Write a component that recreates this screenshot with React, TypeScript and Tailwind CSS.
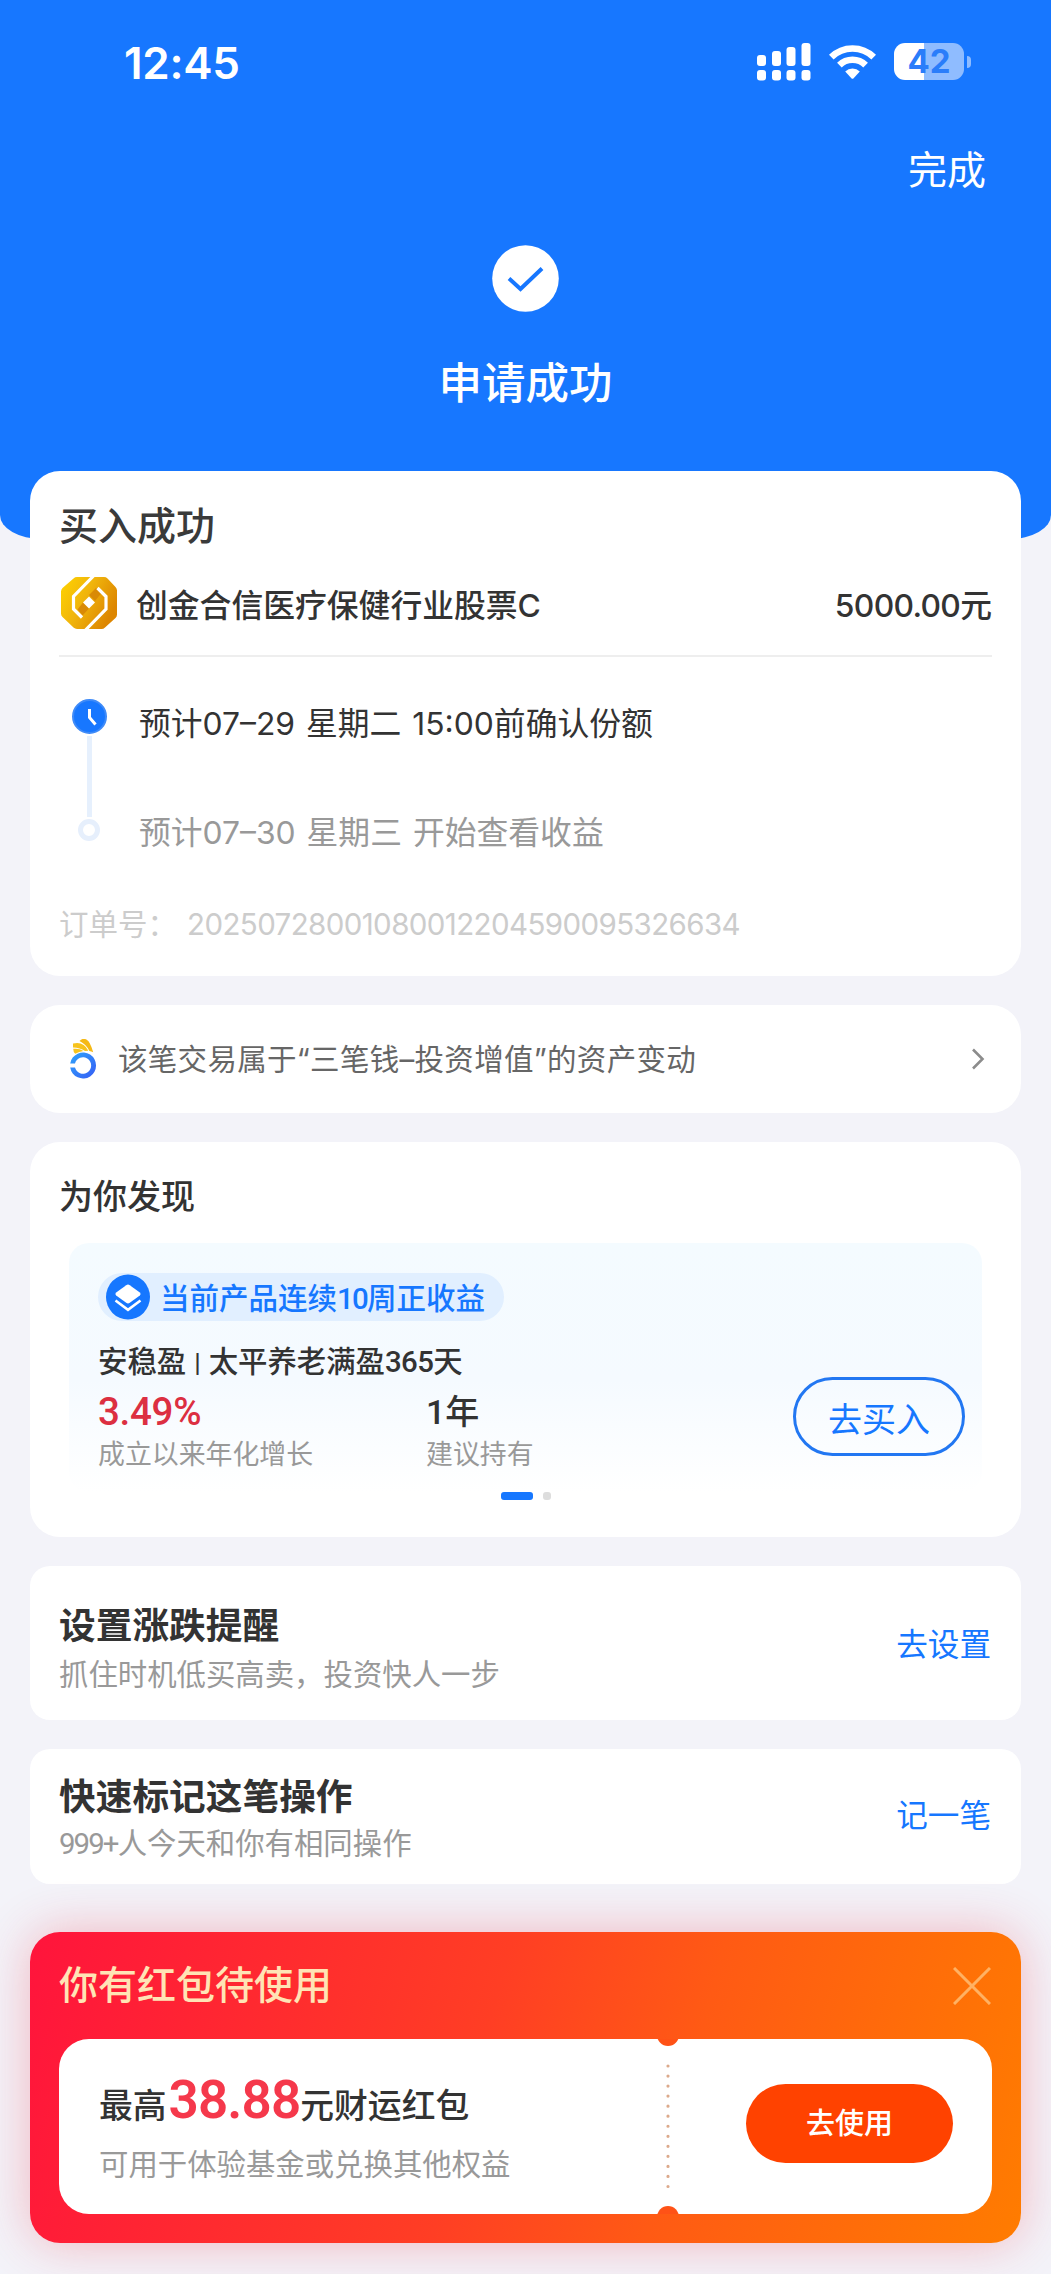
import React from 'react';

const font = "font-['Inter','Noto_Sans_CJK_SC',sans-serif]";
const dinFont = "font-['Roboto','Noto_Sans_CJK_SC',sans-serif]";

function SignalIcon() {
  const bars = [
    { x: 0, y: 12, h: 11 },
    { x: 15, y: 8, h: 15 },
    { x: 29.5, y: 4, h: 19 },
    { x: 44.5, y: 0, h: 23 },
  ];
  return (
    <svg width="54" height="38" viewBox="0 0 54 38" fill="#fff">
      {bars.map((bar) => (
        <g key={bar.x}>
          <rect x={bar.x} y={bar.y} width="9" height={bar.h} rx="3" />
          <rect x={bar.x} y="27" width="9" height="10.5" rx="3" />
        </g>
      ))}
    </svg>
  );
}

function WifiIcon() {
  return (
    <svg width="47" height="36" viewBox="0 0 47 36">
      <g fill="none" stroke="#fff" strokeWidth="6.6">
        <path d="M2.3 13.2a30.2 30.2 0 0 1 42.4 0" />
        <path d="M10.4 21.2a18.6 18.6 0 0 1 26.2 0" />
      </g>
      <path d="M16.2 27.6a10.4 10.4 0 0 1 14.6 0l-6.2 6.7q-1.1 1-2.2 0z" fill="#fff" />
    </svg>
  );
}

function Battery() {
  return (
    <div className="flex items-center gap-[3px]">
      <div className="flex h-[37px] w-[70px] items-center justify-center rounded-[11px] bg-[linear-gradient(to_right,#fff_30px,#8fbcff_30px)] text-[33px] font-bold leading-[37px] text-[#2a7dfa]">
        42
      </div>
      <div className="h-3 w-1 rounded-r-full bg-[#8fbcff]" />
    </div>
  );
}

function FundLogo() {
  return (
    <svg className="mt-px" width="56" height="52" viewBox="0 0 56 52">
      <defs>
        <linearGradient id="gold" x1="0" y1="0" x2="1" y2="0.5">
          <stop offset="0" stopColor="#ffd400" />
          <stop offset="0.5" stopColor="#f0b40c" />
          <stop offset="1" stopColor="#dd8600" />
        </linearGradient>
      </defs>
      <path d="M16 0h27q2 0 3.5 1.4L54.5 10Q56 11.5 56 13.5v24q0 2-1.5 3.5L44 50.5Q42.5 52 40.5 52H16q-2 0-3.5-1.4L1.5 40Q0 38.5 0 36.5v-22Q0 12.5 1.5 11L12.5 1.4Q14 0 16 0z" fill="url(#gold)" />
      <path d="M35 11l5.500 5-6.500 8-6-6z" fill="#d98a06" />
      <path d="M22 25.500l6 6-6.500 7-5-6z" fill="#d98a06" />
      <path d="M28 19.500l6 6-6 6-6-6z" fill="#fff" />
      <g fill="none" stroke="#fff" strokeWidth="3.2">
        <path d="M32.500-1L12.500 19.500V32L21 40.500" />
        <path d="M36.500 11L45 19.500V32L24.500 53" />
      </g>
    </svg>
  );
}

function WalletLogo() {
  return (
    <svg width="27" height="40" viewBox="0 0 27 40">
      <defs>
        <linearGradient id="ring" x1="0" y1="0" x2="1" y2="1">
          <stop offset="0" stopColor="#2fa4fb" />
          <stop offset="1" stopColor="#365cf5" />
        </linearGradient>
      </defs>
      <path d="M9.5 2C13-2 17.500 0 19.600 4q2.200 4 3.600 9.300-1.800-1-3.800-1.300Q16.500 5.500 9.500 2z" fill="#f5b916" />
      <path d="M3 4.600q10.500-2.600 15.300 7.200l-3.300.2Q10 8.800 3 8.600z" fill="#f7c31d" />
      <path d="M3.200 9.800q6-.8 10.300 2.200-4.400.5-8.300 2.800Q3.200 12.800 3.200 9.800z" fill="#f7c31d" />
      <path d="M0.200 24.500A13 13 0 1 1 0.200 28.500H5A8.200 8.200 0 1 0 5 24.500z" fill="url(#ring)" />
    </svg>
  );
}

function LayersIcon() {
  return (
    <svg width="44" height="46" viewBox="0 0 44 46">
      <ellipse cx="22" cy="23" rx="22" ry="22.5" fill="#1677ff" />
      <path d="M20.2 11.2q1.800-1.200 3.600 0l10 7.300q1.800 1.500 0 3l-10 7.300q-1.800 1.200-3.600 0l-10-7.300q-1.800-1.500 0-3z" fill="#fff" />
      <path d="M9.5 26.500L22 35.800l12.500-9.300" fill="none" stroke="#fff" strokeWidth="2.6" />
    </svg>
  );
}

function Header() {
  return (
    <header className="flex h-[539px] flex-col items-center bg-[#1777ff] text-white [border-bottom-left-radius:42px_24px] [border-bottom-right-radius:42px_24px]">
      <div className="flex h-[123px] w-full items-center justify-between pl-[124px] pr-[80px]">
        <span className="pt-0.5 text-[44px] font-semibold leading-none tracking-[-0.3px]">12:45</span>
        <div className="flex items-center gap-[18px]">
          <SignalIcon />
          <WifiIcon />
          <Battery />
        </div>
      </div>
      <div className="flex h-[92px] w-full items-center justify-end pr-[65px] pt-0.5 text-[39px]">完成</div>
      <svg className="mt-[30px]" width="67" height="67" viewBox="0 0 67 67">
        <circle cx="33.5" cy="33.5" r="33.3" fill="#fff" />
        <path d="M17 33.500L28.500 44 50 23.500" fill="none" stroke="#1777ff" strokeWidth="4" />
      </svg>
      <h1 className="mt-[49px] text-[43.5px] font-medium leading-[44px]">申请成功</h1>
    </header>
  );
}

function OrderCard() {
  return (
    <section className="h-[505px] rounded-[30px] bg-white px-[29px] pt-[35px] text-[#333]">
      <h2 className="text-[39px] font-medium leading-10 text-[#3a3a3a]">买入成功</h2>
      <div className="mt-[30px] flex h-[81px] items-start border-b-2 border-[#eee] pl-0.5 text-[31.8px] font-medium leading-[60px]">
        <FundLogo />
        <span className="ml-[19px] flex-1">创金合信医疗保健行业股票C</span>
        <span className="tracking-[-0.7px]">5000.00<span className="tracking-normal">元</span></span>
      </div>
      <div className="flex">
        <div className="flex w-[60px] flex-col items-center pt-[42px]">
          <svg width="35" height="35" viewBox="0 0 35 35">
            <circle cx="17.5" cy="17.5" r="16.5" fill="#1777ff" stroke="#3f8bf8" strokeWidth="2" />
            <path d="M17.500 10v8.500l6 7" fill="none" stroke="#fff" strokeWidth="3" />
          </svg>
          <div className="mt-0.5 h-[81px] w-[5px] bg-[#e6f0fd]" />
          <div className="mt-0.5 size-[22px] rounded-full border-[5px] border-[#e6effc]" />
        </div>
        <div className="pl-5 text-[31.8px] [word-spacing:2px]">
          <p className="mt-[47px] leading-10">预计07–29 星期二 15:00前确认份额</p>
          <p className="mt-[69px] leading-10 text-[#999]">预计07–30 星期三 开始查看收益</p>
        </div>
      </div>
      <div className="mt-[51px] flex text-[29.5px] leading-10 text-[#ccc]">
        <span className="w-[128px]">订单号：</span>
        <span className="tracking-[-0.6px]">20250728001080012204590095326634</span>
      </div>
    </section>
  );
}

function AssetRow() {
  return (
    <section className="flex h-[108px] items-center rounded-[30px] bg-white pl-10 pr-9">
      <WalletLogo />
      <span className="ml-[21px] flex-1 text-[29.5px] tracking-[0.3px] text-[#666]">该笔交易属于“三笔钱–投资增值”的资产变动</span>
      <svg width="14" height="22" viewBox="0 0 14 22" fill="none" stroke="#8c8c8c" strokeWidth="2.6">
        <path d="M2 1.500L11.500 11 2 20.500" />
      </svg>
    </section>
  );
}

function DiscoverCard() {
  return (
    <section className="h-[395px] rounded-[30px] bg-white px-[39px] pt-[35px] text-[#333]">
      <h2 className="-ml-[10px] text-[34px] font-medium leading-10">为你发现</h2>
      <div className="mt-[26px] flex h-[249px] items-start justify-between rounded-[20px] bg-[linear-gradient(to_bottom,#f4fbff,#f5faff_55%,#fff)] pl-[29px] pr-[17px] pt-[30px]">
        <div>
          <div className="flex h-12 w-[406px] items-center rounded-full bg-[#e1efff] pl-2 text-[29.5px] font-medium text-[#1677ff]">
            <LayersIcon />
            <span className={`ml-[10px] pt-1 ${dinFont}`}>
              当前产品连续<span className="tracking-[-1.8px]">10</span>周正收益
            </span>
          </div>
          <p className={`mt-[21px] text-[29.4px] font-medium leading-10 ${dinFont}`}>
            安稳盈<span className="mx-2 text-[26px]">|</span>太平养老满盈<span className="tracking-[-0.6px]">365</span>天
          </p>
          <div className="mt-1 flex">
            <div className="w-[328px]">
              <p className={`text-[38.5px] font-medium leading-[50px] tracking-[-0.3px] text-[#dc2f41] ${dinFont}`}>3.49%</p>
              <p className="-mt-px text-[26.9px] leading-9 text-[#999]">成立以来年化增长</p>
            </div>
            <div>
              <p className={`text-[34px] font-medium leading-[50px] ${dinFont}`}>1年</p>
              <p className="-mt-px text-[26.9px] leading-9 text-[#999]">建议持有</p>
            </div>
          </div>
        </div>
        <button className="mt-[104px] h-[79px] w-[172px] rounded-full border-[3px] border-[#2277f2] pt-1.5 text-[34px] text-[#1677ff]">
          去买入
        </button>
      </div>
      <div className="ml-[432px] flex gap-[10px]">
        <div className="h-2 w-8 rounded-[3px] bg-[#1677ff]" />
        <div className="size-2 rounded-[3px] bg-[#ddd]" />
      </div>
    </section>
  );
}

function CouponCard() {
  return (
    <section className="mt-[19px] h-[311px] rounded-[30px] bg-[linear-gradient(105deg,#ff143c,#ff3e24_45%,#ff5a14_65%,#ff7c00)] px-[29px] shadow-[0_0_50px_rgba(240,40,60,0.3)]">
      <div className="flex h-[107px] items-center justify-between pr-px text-[39px] font-medium text-[#ffe4b5]">
        <h2>你有红包待使用</h2>
        <svg width="38" height="38" viewBox="0 0 38 38" stroke="#ffb163" strokeWidth="3">
          <path d="M1 1l36 36M37 1L1 37" />
        </svg>
      </div>
      <div className="relative flex h-[175px] items-center justify-between overflow-hidden rounded-[30px] bg-white pl-10 pr-[39px]">
        <div className="pt-1">
          <p className="flex h-[54px] items-baseline text-[33.8px] font-medium leading-[54px] text-[#333]">
            最高
            <span className={`ml-0.5 text-[53px] font-semibold tracking-[-0.9px] text-[#f5384b] ${dinFont}`}>38.88</span>
            元财运红包
          </p>
          <p className="mt-[18px] text-[29.4px] leading-10 text-[#999]">可用于体验基金或兑换其他权益</p>
        </div>
        <button className="mb-1.5 h-[79px] w-[207px] rounded-full bg-[#ff4200] text-[29px] font-medium text-white">去使用</button>
        {/* ticket perforation */}
        <div className="absolute left-[598px] top-[-15px] size-[22px] rounded-full bg-[#ff5216]" />
        <div className="absolute bottom-[-14px] left-[598px] size-[22px] rounded-full bg-[#ff5216]" />
        <svg className="absolute left-[607px] top-[25px]" width="4" height="126" viewBox="0 0 4 126">
          <path d="M2 2v122" stroke="#dcaa8c" strokeWidth="3.2" strokeLinecap="round" strokeDasharray="0 10.04" />
        </svg>
      </div>
    </section>
  );
}

const actions = [
  { title: '设置涨跌提醒', count: '', text: '抓住时机低买高卖，投资快人一步', link: '去设置', box: 'h-[154px] pt-[40px]', gap: 'mt-[9px]', linkPos: 'mt-[19px]' },
  { title: '快速标记这笔操作', count: '999+', text: '人今天和你有相同操作', link: '记一笔', box: 'h-[135px] pt-[28px]', gap: 'mt-[7px]', linkPos: 'mt-[19px]' },
];

function App() {
  return (
    <div className={`h-[2274px] w-[1051px] overflow-hidden bg-[#f3f3f9] ${font}`}>
      <Header />
      <main className="-mt-[68px] flex flex-col gap-[29px] px-[30px]">
        <OrderCard />
        <AssetRow />
        <DiscoverCard />
        {actions.map((item) => (
          <section key={item.title} className={`flex items-start justify-between rounded-[20px] bg-white pl-[29px] pr-[30px] ${item.box}`}>
            <div>
              <h3 className="text-[36.7px] font-bold leading-10 text-[#333]">{item.title}</h3>
              <p className={`text-[29.4px] leading-10 text-[#999] ${item.gap}`}>
                <span className={`tracking-[-1.9px] ${dinFont}`}>{item.count}</span>
                {item.text}
              </p>
            </div>
            <a className={`text-[31.6px] leading-10 text-[#1677ff] ${item.linkPos}`}>{item.link}</a>
          </section>
        ))}
        <CouponCard />
      </main>
    </div>
  );
}

export default App;
